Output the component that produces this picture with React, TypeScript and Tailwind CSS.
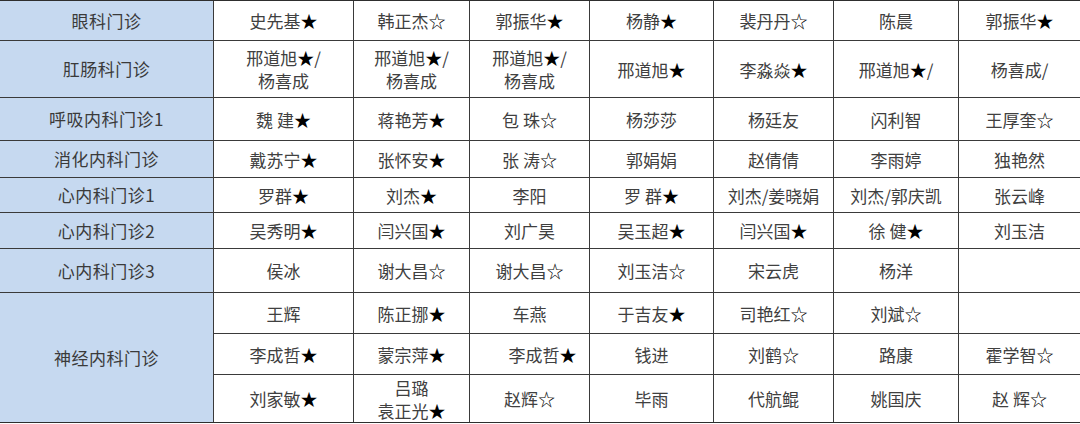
import React from "react";

const rows: { dept: string; tall?: boolean; sub: string[][] }[] = [
  { dept: "眼科门诊", sub: [["史先基★", "韩正杰☆", "郭振华★", "杨静★", "裴丹丹☆", "陈晨", "郭振华★"]] },
  { dept: "肛肠科门诊", sub: [["邢道旭★/\n杨喜成", "邢道旭★/\n杨喜成", "邢道旭★/\n杨喜成", "邢道旭★", "李淼焱★", "邢道旭★/", "杨喜成/"]] },
  { dept: "呼吸内科门诊1", sub: [["魏 建★", "蒋艳芳★", "包 珠☆", "杨莎莎", "杨廷友", "闪利智", "王厚奎☆"]] },
  { dept: "消化内科门诊", sub: [["戴苏宁★", "张怀安★", "张 涛☆", "郭娟娟", "赵倩倩", "李雨婷", "独艳然"]] },
  { dept: "心内科门诊1", sub: [["罗群★", "刘杰★", "李阳", "罗 群★", "刘杰/姜晓娟", "刘杰/郭庆凯", "张云峰"]] },
  { dept: "心内科门诊2", sub: [["吴秀明★", "闫兴国★", "刘广昊", "吴玉超★", "闫兴国★", "徐 健★", "刘玉洁"]] },
  { dept: "心内科门诊3", sub: [["侯冰", "谢大昌☆", "谢大昌☆", "刘玉洁☆", "宋云虎", "杨洋", ""]] },
  {
    dept: "神经内科门诊",
    tall: true,
    sub: [
      ["王辉", "陈正挪★", "车燕", "于吉友★", "司艳红☆", "刘斌☆", ""],
      ["李成哲★", "蒙宗萍★", "李成哲★", "钱进", "刘鹤☆", "路康", "霍学智☆"],
      ["刘家敏★", "吕璐\n袁正光★", "赵辉☆", "毕雨", "代航鲲", "姚国庆", "赵 辉☆"],
    ],
  },
];

function renderText(t: string) {
  return t.split("\n").map((line, i) => (
    <span key={i} className="block">
      {Array.from(line).map((ch, j) =>
        ch === "★" || ch === "☆" ? (
          <span key={j} className="text-black">
            {ch}
          </span>
        ) : (
          <React.Fragment key={j}>{ch}</React.Fragment>
        )
      )}
    </span>
  ));
}

export default function App() {
  const cells: React.ReactNode[] = [];
  rows.forEach((r, ri) => {
    cells.push(
      <div
        key={`d${ri}`}
        className={`bg-[#c6d9f0] flex items-center justify-center text-[17px] text-[#3a3a3a] tracking-[0.5px] ${r.tall ? "row-span-3" : ""}`}
      >
        {r.dept}
      </div>
    );
    r.sub.forEach((s, si) => {
      s.forEach((c, ci) => {
        const shift = r.tall && si === 1 && ci === 2 ? "pl-[26px]" : "";
        cells.push(
          <div
            key={`c${ri}-${si}-${ci}`}
            className={`bg-white flex flex-col items-center justify-center text-center text-[17px] leading-[23px] text-[#404040] ${shift}`}
          >
            {renderText(c)}
          </div>
        );
      });
    });
  });

  return (
    <div className="w-[1080px] h-[424px] bg-white font-['Noto_Sans_CJK_SC','Noto_Sans',sans-serif]">
      <div className="grid gap-px bg-[#3a3a3a] border-y border-[#2e2e2e] grid-cols-[213px_139px_115px_119px_123px_119px_124px_121px] grid-rows-[39px_56px_42px_36px_34px_35px_43px_40px_40px_47px]">
        {cells}
      </div>
    </div>
  );
}
